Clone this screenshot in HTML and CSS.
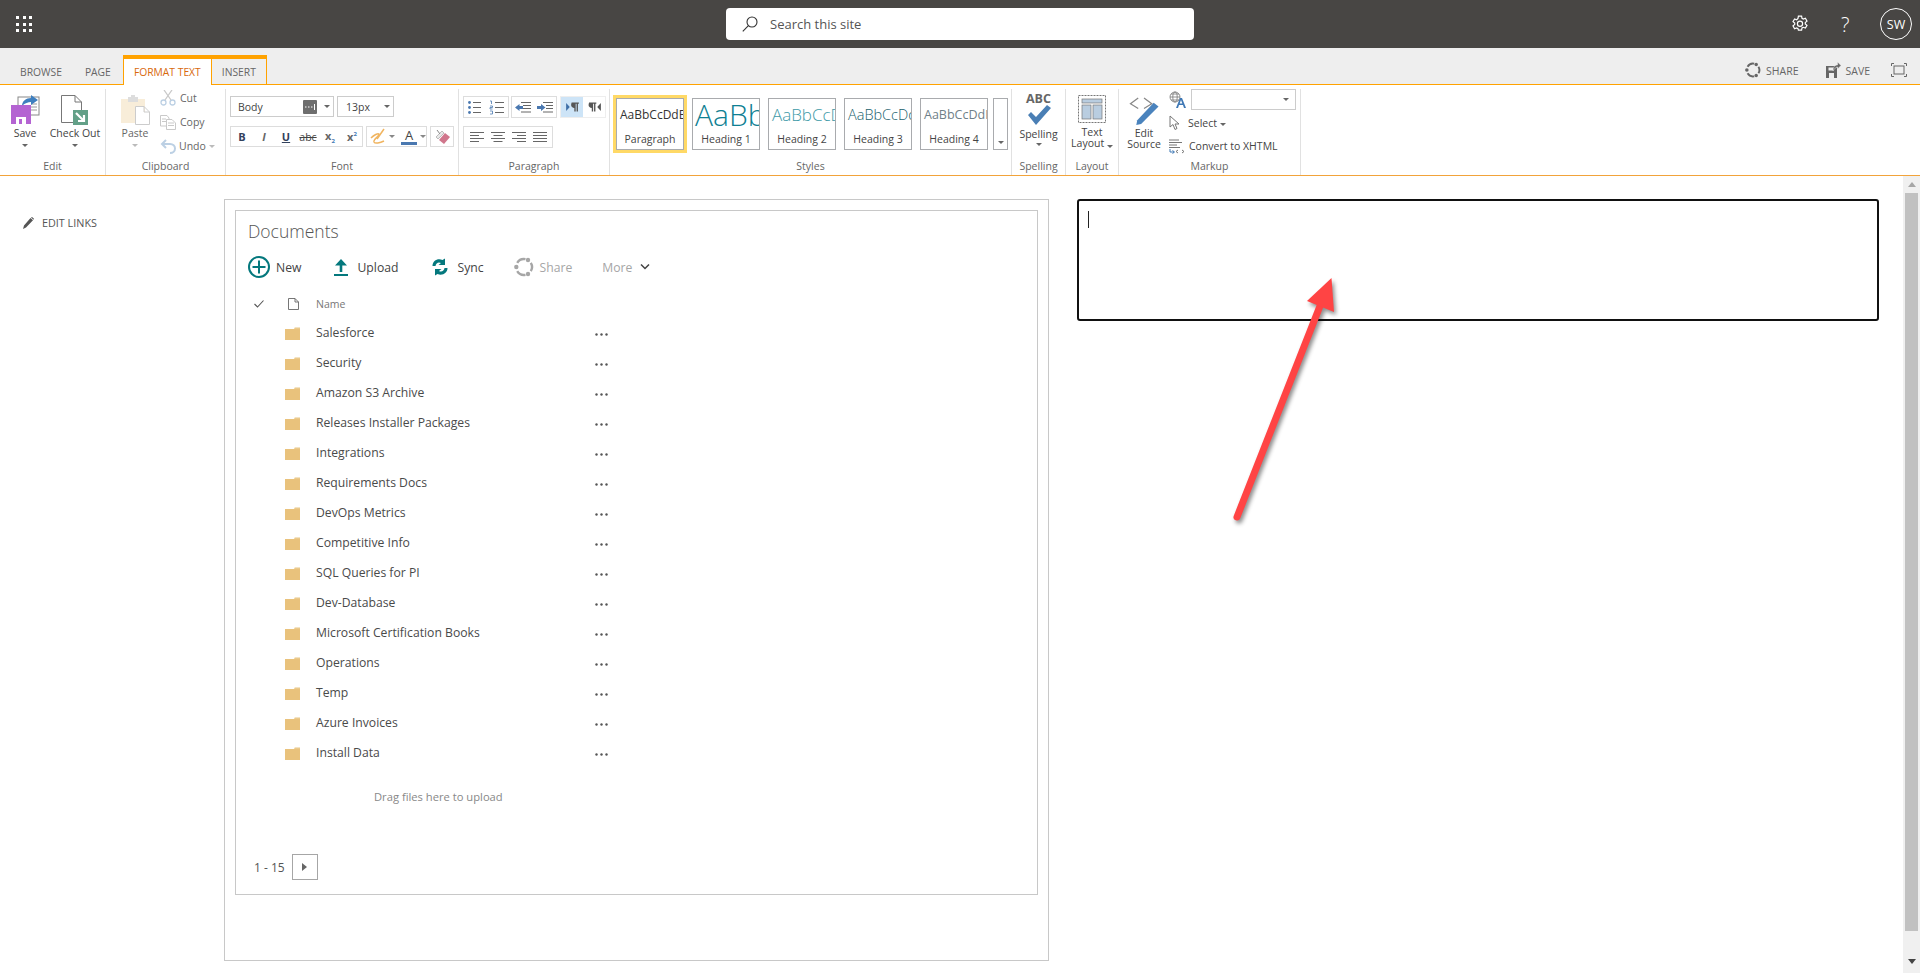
FILE: index.html
```html
<!DOCTYPE html>
<html lang="en">
<head>
    <meta charset="UTF-8">
    <title>Documents</title>
    <link rel="stylesheet" href="styles.css">
</head>
<body>

<svg class="defs" width="0" height="0">
    <symbol id="folder" viewBox="0 0 15 13">
        <path d="M9 1.2 L10 0 H15 V3 H9Z" fill="#f3e3c3"/>
        <path d="M0 2 H9 L10 1.2 H15 V13 H0Z" fill="#e9c27c"/>
    </symbol>
    <symbol id="dots" viewBox="0 0 13 3">
        <circle cx="1.5" cy="1.5" r="1.2" fill="#555"/>
        <circle cx="6.5" cy="1.5" r="1.2" fill="#555"/>
        <circle cx="11.5" cy="1.5" r="1.2" fill="#555"/>
    </symbol>
    <symbol id="circle-arrows" viewBox="0 0 20 20">
        <path d="M11.5 2.1 A8 8 0 0 0 3.2 5.8 M3.2 14.2 A8 8 0 0 0 11.5 17.9 M16.8 5.8 A8 8 0 0 1 16.8 14.2" fill="none" stroke="currentColor" stroke-width="2.4"/>
        <circle cx="14" cy="3" r="2.2" fill="currentColor"/>
        <circle cx="2.3" cy="10" r="2.2" fill="currentColor"/>
        <circle cx="14" cy="17" r="2.2" fill="currentColor"/>
    </symbol>
</svg>

<header class="topbar">
    <div class="waffle">
        <i></i><i></i><i></i><i></i><i></i><i></i><i></i><i></i><i></i>
    </div>
    <div class="search">
        <svg width="16" height="16" viewBox="0 0 16 16" fill="none" stroke="#333" stroke-width="1.1">
            <circle cx="10" cy="6" r="5"/>
            <path d="M6.4 9.6 L.8 15.4"/>
        </svg>
        <span>Search this site</span>
    </div>
    <div class="top-actions">
        <svg class="gear" width="18" height="18" viewBox="0 0 18 18" fill="none" stroke="#fff" stroke-width="1.2">
            <path d="M7.4 1.2h3.2l.4 2.2 1.3.7 2.1-.8 1.6 2.8-1.7 1.4v1.4l1.7 1.4-1.6 2.8-2.1-.8-1.3.7-.4 2.2H7.4L7 13.6l-1.3-.7-2.1.8L2 10.9l1.7-1.4V8.1L2 6.7l1.6-2.8 2.1.8L7 3.4z"/>
            <circle cx="9" cy="8.8" r="2.6"/>
        </svg>
        <span class="help">?</span>
        <span class="avatar">SW</span>
    </div>
</header>

<nav class="tabs">
    <span class="tab">BROWSE</span>
    <span class="tab tab-page">PAGE</span>
    <span class="tab tab-active">FORMAT TEXT</span>
    <span class="tab tab-insert">INSERT</span>
    <div class="tab-actions">
        <svg class="tab-icon" width="16" height="16"><use href="#circle-arrows"/></svg>
        <span class="tab-action">SHARE</span>
        <svg class="tab-icon save-icon" width="15" height="16" viewBox="0 0 15 16">
            <path d="M0 4 H9 L11 6 V16 H0Z" fill="#666"/>
            <rect x="3" y="11" width="5" height="5" fill="#eee"/>
            <rect x="2.5" y="5.5" width="5" height="3" fill="#eee"/>
            <path d="M7 9 C7 5 9 3 11.5 3 V0 L15 3.5 L11.5 7 V5 C10 5 8.5 6.5 7 9Z" fill="#666" stroke="#eee" stroke-width=".5"/>
        </svg>
        <span class="tab-action">SAVE</span>
        <svg class="focus" width="16" height="14" viewBox="0 0 16 14" fill="none" stroke="#666">
            <path d="M.5 3V.5H3 M13 .5h2.5V3 M15.5 11v2.5H13 M3 13.5H.5V11"/>
            <rect x="3" y="3" width="10" height="8"/>
        </svg>
    </div>
</nav>

<section class="ribbon">
    <div class="group group-edit">
        <div class="group-body">
            <div class="big-btn btn-save">
                <svg width="29" height="30" viewBox="0 0 29 30">
                    <rect x="7" y="2" width="21" height="18" fill="#fff" stroke="#888"/>
                    <path d="M20 9h6M20 12h6M20 15h6" stroke="#999"/>
                    <path d="M11 11 C11 6 15 3 20 3 V0 L27 5 L20 10 V7 C17 7 14 8 11 11Z" fill="#3f7fbf"/>
                    <path d="M0 10 H20 V29 H0Z" fill="#b463d2"/>
                    <rect x="5" y="22" width="10" height="7" fill="#fff"/>
                    <rect x="8" y="24" width="3" height="5" fill="#b463d2"/>
                </svg>
                <span>Save</span>
                <b class="caret"></b>
            </div>
            <div class="big-btn btn-checkout">
                <svg width="28" height="30" viewBox="0 0 28 30">
                    <path d="M.5.5 H14 L20.5 7 V27.5 H.5Z M14 .5 V7 H20.5" fill="#fff" stroke="#777"/>
                    <rect x="12" y="15" width="15" height="15" fill="#63a088"/>
                    <path d="M15 18 L23 26 M23 20 V26 H17" fill="none" stroke="#fff" stroke-width="2.2"/>
                </svg>
                <span>Check Out</span>
                <b class="caret"></b>
            </div>
        </div>
        <div class="group-label">Edit</div>
    </div>

    <div class="group group-clip">
        <div class="group-body">
            <div class="big-btn btn-paste dim">
                <svg width="29" height="30" viewBox="0 0 29 30">
                    <path d="M0 4 H24 V28 H0Z" fill="#f8edd9"/>
                    <rect x="7" y="2" width="10" height="5" fill="#ddd"/>
                    <rect x="10" y="0" width="4" height="3" fill="#ddd"/>
                    <path d="M14.5 11.5 H23 L28.5 17 V29.5 H14.5Z M23 11.5 V17 H28.5" fill="#fff" stroke="#ccc"/>
                </svg>
                <span>Paste</span>
                <b class="caret"></b>
            </div>
            <div class="small-col dim">
                <div class="small-btn">
                    <svg width="16" height="16" viewBox="0 0 16 16" fill="none" stroke="#bcd0e4" stroke-width="1.3">
                        <circle cx="3.5" cy="12.5" r="2.5"/>
                        <circle cx="12.5" cy="12.5" r="2.5"/>
                        <path d="M5 10 L12 0 M11 10 L4 0" stroke="#c9c9c9"/>
                    </svg>
                    <span>Cut</span>
                </div>
                <div class="small-btn">
                    <svg width="16" height="15" viewBox="0 0 16 15" fill="#fff" stroke="#c9c9c9">
                        <path d="M.5 .5H7L9 3V11H.5Z"/>
                        <path d="M6.5 4.5H12L15.5 8V14.5H6.5Z"/>
                        <path d="M8 8h6M8 10.5h6M2 4h4M2 6.5h4" fill="none"/>
                    </svg>
                    <span>Copy</span>
                </div>
                <div class="small-btn btn-undo">
                    <svg width="16" height="15" viewBox="0 0 16 15" fill="none" stroke="#bcd0e4" stroke-width="2">
                        <path d="M2 5H10 C13 5 15 7 15 9.5 C15 12 13 14 10 14"/>
                        <path d="M6 1 L2 5 L6 9"/>
                    </svg>
                    <span>Undo</span>
                    <b class="caret caret-small"></b>
                </div>
            </div>
        </div>
        <div class="group-label">Clipboard</div>
    </div>

    <div class="group group-font">
        <div class="group-body">
            <div class="font-rows">
                <div class="font-row">
                    <div class="select select-font">
                        <span>Body</span>
                        <svg width="14" height="14" viewBox="0 0 14 14">
                            <rect width="14" height="14" rx="1" fill="#6e6e6e"/>
                            <path d="M2 7h1.5M5 7h1.5M8 7h1.5M11.5 4v6" stroke="#fff"/>
                        </svg>
                        <b class="caret"></b>
                    </div>
                    <div class="select select-size">
                        <span>13px</span>
                        <b class="caret"></b>
                    </div>
                </div>
                <div class="font-row">
                    <div class="tool-box box-format">
                        <span class="fmt fmt-b">B</span>
                        <span class="fmt fmt-i">I</span>
                        <span class="fmt fmt-u">U</span>
                        <span class="fmt fmt-s">abc</span>
                        <span class="fmt fmt-x">x<sub>2</sub></span>
                        <span class="fmt fmt-x">x<sup>2</sup></span>
                    </div>
                    <div class="tool-box box-color">
                        <svg width="16" height="17" viewBox="0 0 16 17" fill="none" stroke="#f0b45f" stroke-width="1.5">
                            <path d="M1 10 C4 7 8 5 9 6 C10 8 3 11 4 14 C5 16 10 15 14 13"/>
                            <path d="M7 11 L14 1"/>
                        </svg>
                        <b class="caret caret-small"></b>
                        <span class="font-color">A</span>
                        <b class="caret caret-small"></b>
                    </div>
                    <div class="tool-box box-erase">
                        <svg width="15" height="15" viewBox="0 0 15 15">
                            <path d="M1 8 L7 2 L9 4 L3 10Z" fill="#e8e8e8" stroke="#999" stroke-width=".6"/>
                            <path d="M4 11 L10 4 L15 8 L9 15Z" fill="#d0768c"/>
                            <path d="M2 1 L5 5" stroke="#888"/>
                        </svg>
                    </div>
                </div>
            </div>
        </div>
        <div class="group-label">Font</div>
    </div>

    <div class="group group-para">
        <div class="group-body">
            <div class="para-row">
                <div class="tool-box para-lists">
                    <svg width="13" height="15" viewBox="0 0 13 15" stroke="#666">
                        <path d="M5 2.5h8M5 7.5h8M5 12.5h8"/>
                        <circle cx="1.5" cy="2.5" r="1.4" fill="#4a78b0" stroke="none"/>
                        <circle cx="1.5" cy="7.5" r="1.4" fill="#4a78b0" stroke="none"/>
                        <circle cx="1.5" cy="12.5" r="1.4" fill="#4a78b0" stroke="none"/>
                    </svg>
                    <svg width="15" height="15" viewBox="0 0 15 15" stroke="#666">
                        <path d="M6 2.5h9M6 7.5h9M6 12.5h9"/>
                        <path d="M1 1h1.5v3M1 6h2.5v1.5H1V9h2.5M1 11h2.5v3H1" fill="none" stroke="#4a78b0" stroke-width=".8"/>
                    </svg>
                </div>
                <div class="tool-box para-indent">
                    <svg width="16" height="11" viewBox="0 0 16 11" stroke="#666">
                        <path d="M6 .5h10M8 3.5h8M8 6.5h8M6 10h10"/>
                        <path d="M0 5.5 L4.5 2 V4 H8 V7 H4.5 V9Z" fill="#4a78b0" stroke="none"/>
                    </svg>
                    <svg width="16" height="11" viewBox="0 0 16 11" stroke="#666">
                        <path d="M6 .5h10M9 3.5h7M9 6.5h7M6 10h10"/>
                        <path d="M8.5 5.5 L4 2 V4 H0 V7 H4 V9Z" fill="#4a78b0" stroke="none"/>
                    </svg>
                </div>
                <div class="tool-box para-dir">
                    <span class="dir-btn dir-on">
                        <svg width="13" height="10" viewBox="0 0 14 11" fill="#555">
                            <path d="M0 1 L4 5.5 L0 10Z" fill="#3f6fa8"/>
                            <path d="M6 .5H14V2H13V10.5H11.5V2H10.5V10.5H9V6.5C7 6.5 5.5 5 5.5 3.5C5.5 2 6 1 6 .5Z"/>
                        </svg>
                    </span>
                    <span class="dir-btn">
                        <svg width="13" height="10" viewBox="0 0 14 11" fill="#555">
                            <path d="M14 1 L10 5.5 L14 10Z"/>
                            <path d="M1 .5H9V2H8V10.5H6.5V2H5.5V10.5H4V6.5C2 6.5 .5 5 .5 3.5C.5 2 1 1 1 .5Z"/>
                        </svg>
                    </span>
                </div>
            </div>
            <div class="tool-box para-align">
                <svg width="14" height="11" viewBox="0 0 14 11" stroke="#666"><path d="M0 .5h14M0 3.5h9M0 6.5h14M0 9.5h9"/></svg>
                <svg width="14" height="11" viewBox="0 0 14 11" stroke="#666"><path d="M0 .5h14M2.5 3.5h9M0 6.5h14M2.5 9.5h9"/></svg>
                <svg width="14" height="11" viewBox="0 0 14 11" stroke="#666"><path d="M0 .5h14M5 3.5h9M0 6.5h14M5 9.5h9"/></svg>
                <svg width="14" height="11" viewBox="0 0 14 11" stroke="#666"><path d="M0 .5h14M0 3.5h14M0 6.5h14M0 9.5h14"/></svg>
            </div>
        </div>
        <div class="group-label">Paragraph</div>
    </div>

    <div class="group group-styles">
        <div class="group-body">
            <div class="style-wrap">
                <div class="style-card">
                    <div class="style-sample sample-p">AaBbCcDdEe</div>
                    <div class="style-name">Paragraph</div>
                </div>
            </div>
            <div class="style-card">
                <div class="style-sample sample-h1">AaBb</div>
                <div class="style-name">Heading 1</div>
            </div>
            <div class="style-card">
                <div class="style-sample sample-h2">AaBbCcDd</div>
                <div class="style-name">Heading 2</div>
            </div>
            <div class="style-card">
                <div class="style-sample sample-h3">AaBbCcDdE</div>
                <div class="style-name">Heading 3</div>
            </div>
            <div class="style-card">
                <div class="style-sample sample-h4">AaBbCcDdEe</div>
                <div class="style-name">Heading 4</div>
            </div>
            <div class="style-more"><b class="caret"></b></div>
        </div>
        <div class="group-label">Styles</div>
    </div>

    <div class="group group-spell">
        <div class="group-body">
            <div class="big-btn btn-spell">
                <span class="abc">ABC</span>
                <svg width="24" height="20" viewBox="0 0 24 20">
                    <path d="M1 10 L4 7 L9 12 L20 0 L24 3 L9 20Z" fill="#4a7fb5"/>
                </svg>
                <span>Spelling</span>
                <b class="caret"></b>
            </div>
        </div>
        <div class="group-label">Spelling</div>
    </div>

    <div class="group group-layout">
        <div class="group-body">
            <div class="big-btn btn-layout">
                <svg width="28" height="28" viewBox="0 0 28 28" fill="none">
                    <rect x=".5" y=".5" width="27" height="27" stroke="#777" stroke-dasharray="2 1"/>
                    <rect x="4" y="4" width="20" height="4" fill="#b9cde0" stroke="#777" stroke-width=".7"/>
                    <rect x="4" y="10" width="9" height="14" fill="#b9cde0" stroke="#777" stroke-width=".7"/>
                    <rect x="15" y="10" width="9" height="14" fill="#b9cde0" stroke="#777" stroke-width=".7"/>
                </svg>
                <span>Text</span>
                <span>Layout <b class="caret caret-inline"></b></span>
            </div>
        </div>
        <div class="group-label">Layout</div>
    </div>

    <div class="group group-markup">
        <div class="group-body">
            <div class="big-btn btn-source">
                <svg width="31" height="30" viewBox="0 0 31 31">
                    <path d="M9 3 L1 9 L9 14 M15 3 L23 9 L15 14" fill="none" stroke="#888" stroke-width="1.3"/>
                    <path d="M8 26 L25 8 L30 12 L12 30 L7 31Z" fill="#4a83bd"/>
                </svg>
                <span>Edit</span>
                <span>Source</span>
            </div>
            <div class="small-col markup-col">
                <div class="small-btn markup-lang">
                    <svg width="17" height="17" viewBox="0 0 17 17">
                        <g fill="none" stroke="#777" stroke-width=".8">
                            <circle cx="6" cy="6" r="5"/>
                            <ellipse cx="6" cy="6" rx="2.2" ry="5"/>
                            <path d="M1 6h10M2 3h8M2 9h8"/>
                        </g>
                        <path d="M7 17 L11 7 H13 L17 17 H15 L14 14 H10 L9 17Z M10.7 12.5H13.3L12 9Z" fill="#3f78b5" fill-rule="evenodd"/>
                    </svg>
                    <div class="select select-lang"><b class="caret"></b></div>
                </div>
                <div class="small-btn">
                    <svg width="15" height="16" viewBox="0 0 15 16">
                        <path d="M1 1 V12 L4 9.5 L6 14.5 L8 13.5 L6 9 H10Z" fill="#fff" stroke="#777"/>
                    </svg>
                    <span>Select <b class="caret caret-inline"></b></span>
                </div>
                <div class="small-btn btn-convert">
                    <svg width="16" height="15" viewBox="0 0 16 15" fill="none">
                        <path d="M0 1h10M0 3.5h13M0 6h8M0 8.5h11" stroke="#777"/>
                        <path d="M1 10v3h4M3.5 11.5L5.5 13L3.5 14.5" stroke="#3f78b5"/>
                        <path d="M9 11l-2 1.5L9 14M13 11l2 1.5L13 14" stroke="#777"/>
                    </svg>
                    <span>Convert to XHTML</span>
                </div>
            </div>
        </div>
        <div class="group-label">Markup</div>
    </div>
</section>

<main class="page">
    <aside class="side-nav">
        <svg width="11" height="12" viewBox="0 0 11 12">
            <path d="M0 12 L1 8.5 L7.5 1 L10 3.2 L3 10.5Z M8 .5 L9 0 L11 1.8 L10.5 2.7Z" fill="#555"/>
        </svg>
        <span>EDIT LINKS</span>
    </aside>

    <section class="zone">
        <div class="webpart">
            <h2 class="wp-title">Documents</h2>

            <div class="commands">
                <div class="cmd cmd-new">
                    <svg width="22" height="22" viewBox="0 0 22 22" fill="none" stroke="#04787d" stroke-width="2">
                        <circle cx="11" cy="11" r="10"/>
                        <path d="M11 4.5v13M4.5 11h13"/>
                    </svg>
                    <span>New</span>
                </div>
                <div class="cmd cmd-upload">
                    <svg width="14" height="17" viewBox="0 0 14 17" fill="#04787d">
                        <path d="M7 0 L13 6.5 H8.3 V13 H5.7 V6.5 H1Z"/>
                        <rect x="0" y="15" width="14" height="2"/>
                    </svg>
                    <span>Upload</span>
                </div>
                <div class="cmd cmd-sync">
                    <svg width="18" height="18" viewBox="0 0 17 18" fill="#04787d">
                        <path d="M1 8 C1 3 6 0 11 2 L13.5 .5 V7 H7 L9.5 5 C7 3.5 4.5 5 4 8Z"/>
                        <path d="M16 10 C16 15 11 18 6 16 L3.5 17.5 V11 H10 L7.5 13 C10 14.5 12.5 13 13 10Z"/>
                    </svg>
                    <span>Sync</span>
                </div>
                <div class="cmd cmd-share off">
                    <svg width="20" height="20"><use href="#circle-arrows"/></svg>
                    <span>Share</span>
                </div>
                <div class="cmd cmd-more off">
                    <span>More</span>
                    <svg width="10" height="6" viewBox="0 0 10 6" fill="none" stroke="#444" stroke-width="1.5">
                        <path d="M1 .5 L5 4.5 L9 .5"/>
                    </svg>
                </div>
            </div>

            <div class="list-head">
                <svg class="head-check" width="10" height="8" viewBox="0 0 10 8" fill="none" stroke="#555" stroke-width="1.1">
                    <path d="M.5 4 L3.5 7 L9.5 .5"/>
                </svg>
                <svg class="head-doc" width="11" height="12" viewBox="0 0 11 12" fill="none" stroke="#666" stroke-width=".9">
                    <path d="M.5 .5H7L10.5 4V11.5H.5Z M7 .5V4H10.5"/>
                </svg>
                <span>Name</span>
            </div>

            <div class="rows">
                <div class="row"><svg class="fold"><use href="#folder"/></svg><span class="row-name">Salesforce</span><svg class="more"><use href="#dots"/></svg></div>
                <div class="row"><svg class="fold"><use href="#folder"/></svg><span class="row-name">Security</span><svg class="more"><use href="#dots"/></svg></div>
                <div class="row"><svg class="fold"><use href="#folder"/></svg><span class="row-name">Amazon S3 Archive</span><svg class="more"><use href="#dots"/></svg></div>
                <div class="row"><svg class="fold"><use href="#folder"/></svg><span class="row-name">Releases Installer Packages</span><svg class="more"><use href="#dots"/></svg></div>
                <div class="row"><svg class="fold"><use href="#folder"/></svg><span class="row-name">Integrations</span><svg class="more"><use href="#dots"/></svg></div>
                <div class="row"><svg class="fold"><use href="#folder"/></svg><span class="row-name">Requirements Docs</span><svg class="more"><use href="#dots"/></svg></div>
                <div class="row"><svg class="fold"><use href="#folder"/></svg><span class="row-name">DevOps Metrics</span><svg class="more"><use href="#dots"/></svg></div>
                <div class="row"><svg class="fold"><use href="#folder"/></svg><span class="row-name">Competitive Info</span><svg class="more"><use href="#dots"/></svg></div>
                <div class="row"><svg class="fold"><use href="#folder"/></svg><span class="row-name">SQL Queries for PI</span><svg class="more"><use href="#dots"/></svg></div>
                <div class="row"><svg class="fold"><use href="#folder"/></svg><span class="row-name">Dev-Database</span><svg class="more"><use href="#dots"/></svg></div>
                <div class="row"><svg class="fold"><use href="#folder"/></svg><span class="row-name">Microsoft Certification Books</span><svg class="more"><use href="#dots"/></svg></div>
                <div class="row"><svg class="fold"><use href="#folder"/></svg><span class="row-name">Operations</span><svg class="more"><use href="#dots"/></svg></div>
                <div class="row"><svg class="fold"><use href="#folder"/></svg><span class="row-name">Temp</span><svg class="more"><use href="#dots"/></svg></div>
                <div class="row"><svg class="fold"><use href="#folder"/></svg><span class="row-name">Azure Invoices</span><svg class="more"><use href="#dots"/></svg></div>
                <div class="row"><svg class="fold"><use href="#folder"/></svg><span class="row-name">Install Data</span><svg class="more"><use href="#dots"/></svg></div>
            </div>

            <div class="drag-hint">Drag files here to upload</div>

            <div class="pager">
                <span>1 - 15</span>
                <button class="pager-next"><i></i></button>
            </div>
        </div>
    </section>

    <section class="editor"><i class="text-caret"></i></section>

    <div class="scrollbar">
        <i class="scroll-up"></i>
        <div class="scroll-thumb"></div>
        <i class="scroll-down"></i>
    </div>
</main>

<!-- annotation drawn over the page -->
<svg class="annot" width="130" height="260" viewBox="0 0 130 260">
    <path d="M17 247 L100 36" stroke="#ff4444" stroke-width="7" stroke-linecap="round"/>
    <path d="M111.5 8 L87 31 L114 42Z" fill="#ff4444"/>
</svg>

</body>
</html>
```

FILE: styles.css
```css
* {
    box-sizing: border-box;
}

html,
body {
    margin: 0;
    height: 973px;
    overflow: hidden;
}

body {
    position: relative;
    font-family: "Open Sans", "Noto Sans", sans-serif;
    font-size: 10.5px;
    color: #444;
    background: #fff;
}

.defs {
    position: absolute;
}

/* top bar */
.topbar {
    height: 48px;
    background: #484644;
    display: flex;
    align-items: center;
    position: relative;
}

.waffle {
    width: 16px;
    margin-left: 16px;
    display: grid;
    grid-template-columns: repeat(3, 3px);
    gap: 3.5px;
}

.waffle i {
    width: 3px;
    height: 3px;
    background: #fff;
}

.search {
    position: absolute;
    left: 726px;
    top: 8px;
    width: 468px;
    height: 32px;
    background: #fff;
    border-radius: 4px;
    display: flex;
    align-items: center;
    padding-left: 16px;
    gap: 12px;
    font-size: 13px;
    color: #555;
}

.top-actions {
    margin-left: auto;
    display: flex;
    align-items: center;
    color: #fff;
}

.help {
    margin-left: 32px;
    font-size: 20px;
    font-weight: 300;
    width: 13px;
}

.avatar {
    margin-left: 26px;
    margin-right: 8px;
    width: 32px;
    height: 32px;
    border: 1px solid #fff;
    border-radius: 50%;
    display: flex;
    align-items: center;
    justify-content: center;
    font-size: 12.5px;
}

/* tabs */
.tabs {
    height: 37px;
    background: #eee;
    border-bottom: 1px solid #ffa200;
    display: flex;
    align-items: flex-end;
    padding-left: 20px;
    font-size: 10.3px;
    color: #666;
}

.tab {
    height: 29px;
    line-height: 29px;
    padding-top: 3px;
}

.tab-page {
    margin-left: 23px;
}

.tab-active {
    margin-left: 12px;
    width: 89px;
    text-align: center;
    background: #fff;
    color: #d8690c;
    border: 1px solid #ffa200;
    border-top-width: 4px;
    border-bottom: 0;
    height: 30px;
    margin-bottom: -1px;
    line-height: 26px;
    padding-top: 0;
}

.tab-insert {
    width: 55px;
    text-align: center;
    border: 1px solid #ffa200;
    border-top-width: 4px;
    border-left: 0;
    border-bottom: 0;
    line-height: 26px;
    padding-top: 0;
}

.tab-actions {
    margin-left: auto;
    margin-right: 13px;
    height: 29px;
    display: flex;
    align-items: center;
    color: #666;
    font-size: 10.5px;
}

.tab-action {
    margin-left: 5px;
    margin-top: 2px;
}

.save-icon {
    margin-left: 27px;
}

.focus {
    margin-left: 21px;
}

/* ribbon */
.ribbon {
    height: 91px;
    border-bottom: 1px solid #f2a33a;
    display: flex;
}

.group {
    flex: none;
    display: flex;
    flex-direction: column;
    margin-top: 4px;
    border-right: 1px solid #e1e1e1;
}

.group-body {
    flex: 1;
    display: flex;
    min-height: 0;
}

.group-label {
    height: 17px;
    line-height: 17px;
    text-align: center;
    color: #666;
}

.group-edit {
    width: 106px;
}

.group-clip {
    width: 120px;
}

.group-font {
    width: 233px;
}

.group-para {
    width: 151px;
}

.group-styles {
    width: 402px;
}

.group-spell {
    width: 54px;
}

.group-layout {
    width: 53px;
}

.group-markup {
    width: 182px;
}

.caret {
    display: block;
    width: 0;
    height: 0;
    border: 3.5px solid transparent;
    border-top: 3.5px solid #666;
    border-bottom: 0;
}

.caret-small {
    border-width: 3px;
    border-bottom: 0;
    border-top-color: #888;
}

.caret-inline {
    display: inline-block;
    vertical-align: middle;
    border-width: 3px;
    border-bottom: 0;
}

.big-btn {
    display: flex;
    flex-direction: column;
    align-items: center;
    padding-top: 6px;
    line-height: 11px;
    white-space: nowrap;
}

.big-btn svg {
    flex: none;
    margin-bottom: 3px;
}

.big-btn .caret {
    margin-top: 5px;
}

.dim {
    color: #666;
}

.dim .caret {
    border-top-color: #bbb;
}

.btn-save {
    width: 40px;
    margin-left: 5px;
}

.btn-checkout {
    width: 52px;
    margin-left: 4px;
}

.btn-paste {
    width: 36px;
    margin-left: 11px;
}

.small-col {
    display: flex;
    flex-direction: column;
    gap: 8px;
    margin-left: 7px;
    padding-top: 1px;
}

.small-btn {
    height: 16px;
    display: flex;
    align-items: center;
    gap: 4px;
    white-space: nowrap;
}

.btn-undo {
    gap: 3px;
}

.small-btn .caret-small {
    margin-left: 0;
    border-top-color: #bbb;
}

/* font group */
.font-rows {
    margin-left: 4px;
    padding-top: 7px;
    display: flex;
    flex-direction: column;
    gap: 9px;
}

.font-row {
    display: flex;
    gap: 3px;
}

.select {
    height: 21px;
    border: 1px solid #ccc;
    display: flex;
    align-items: center;
    padding-left: 7px;
}

.select-font {
    width: 104px;
}

.select-font svg {
    margin-left: auto;
    margin-right: 7px;
}

.select-font .caret {
    margin-right: 3px;
}

.select-size {
    width: 57px;
    padding-left: 8px;
}

.select-size .caret {
    margin-left: auto;
    margin-right: 3px;
}

.tool-box {
    height: 21px;
    border: 1px solid #ddd;
    display: flex;
    align-items: center;
}

.box-format {
    width: 133px;
}

.fmt {
    flex: none;
    width: 22px;
    text-align: center;
    font-size: 11px;
    color: #444;
}

.fmt-b {
    font-weight: 700;
    color: #33415c;
}

.fmt-i {
    font-style: italic;
    font-weight: 700;
    color: #666;
}

.fmt-u {
    text-decoration: underline;
    font-weight: 700;
    color: #33415c;
}

.fmt-s {
    text-decoration: line-through;
    font-size: 10.5px;
}

.fmt-x {
    font-weight: 700;
    color: #666;
}

.fmt-x sub,
.fmt-x sup {
    font-size: 6px;
    color: #3f78b5;
}

.box-color {
    width: 61px;
    padding-left: 3px;
    gap: 3px;
}

.font-color {
    width: 16px;
    margin-left: 3px;
    text-align: center;
    font-size: 13px;
    line-height: 13px;
    border-bottom: 3px solid #4a78b0;
}

.box-erase {
    width: 24px;
    justify-content: center;
}

/* paragraph group */
.group-para .group-body {
    flex-direction: column;
    padding: 7px 0 0 4px;
    gap: 8px;
}

.para-row {
    display: flex;
    gap: 2px;
}

.para-row .tool-box {
    height: 22px;
    justify-content: space-around;
}

.para-lists {
    width: 46px;
}

.para-indent {
    width: 46px;
}

.para-dir {
    width: 46px;
    margin-left: 1px;
    border: 1px solid #eee;
}

.dir-btn {
    flex: 1;
    height: 100%;
    display: flex;
    align-items: center;
    justify-content: center;
}

.dir-on {
    background: #cde4f7;
}

.para-align {
    width: 90px;
    height: 22px;
    justify-content: space-around;
    padding: 0 2px;
}

/* styles gallery */
.group-styles .group-body {
    padding: 9px 0 0 6px;
    gap: 8px;
}

.style-wrap {
    margin: -3px -3px 0;
    height: 58px;
    padding: 3px;
    background: #ffd966;
    flex: none;
}

.style-card {
    width: 68px;
    height: 52px;
    border: 1px solid #a9abae;
    background: #fff;
    flex: none;
    text-align: center;
    overflow: hidden;
}

.style-sample {
    height: 32px;
    line-height: 31px;
    white-space: nowrap;
    overflow: hidden;
    text-align: left;
    padding-left: 3px;
}

.sample-p {
    font-size: 12px;
    color: #333;
}

.sample-h1 {
    font-size: 30px;
    font-weight: 300;
    color: #0f7f93;
    padding-left: 2px;
}

.sample-h2 {
    font-size: 17px;
    font-weight: 300;
    color: #3d9aa8;
}

.sample-h3 {
    font-size: 14.5px;
    font-weight: 300;
    color: #225f6e;
}

.sample-h4 {
    font-size: 12.5px;
    color: #6f7f88;
}

.style-name {
    line-height: 14px;
    margin-top: 1px;
}

.style-more {
    width: 15px;
    height: 52px;
    border: 1px solid #a9abae;
    margin-left: -3px;
    display: flex;
    align-items: flex-end;
    justify-content: center;
    padding-bottom: 5px;
}

/* spelling, layout, markup */
.btn-spell {
    width: 100%;
    padding-top: 4px;
}

.abc {
    font-size: 12.5px;
    font-weight: 700;
    line-height: 12px;
    color: #666;
}

.btn-spell svg {
    margin-top: 0;
    margin-bottom: 4px;
}

.btn-spell .caret {
    margin-top: 3px;
}

.btn-layout {
    width: 100%;
}

.btn-layout svg {
    margin-bottom: 4px;
}

.btn-source {
    width: 44px;
    margin-left: 3px;
}

.markup-col {
    margin-left: 3px;
    padding-top: 0;
    gap: 5px;
}

.markup-lang {
    height: 21px;
    gap: 5px;
}

.select-lang {
    width: 105px;
    justify-content: flex-end;
    padding-right: 6px;
}

.btn-convert {
    margin-top: 2px;
}

/* page */
.page {
    height: 797px;
    display: flex;
    align-items: flex-start;
}

.side-nav {
    width: 224px;
    flex: none;
    padding: 39px 0 0 23px;
    display: flex;
    align-items: center;
    gap: 8px;
    font-size: 10.8px;
    color: #555;
}

.zone {
    flex: none;
    width: 825px;
    height: 762px;
    margin-top: 23px;
    padding: 10px;
    border: 1px solid #c8c8c8;
}

.webpart {
    width: 803px;
    height: 685px;
    border: 1px solid #c8c8c8;
    padding: 0 12px;
}

.wp-title {
    margin: 0;
    padding-top: 7px;
    height: 36px;
    font-size: 17.5px;
    line-height: 26px;
    font-weight: 300;
    color: #555;
}

.commands {
    height: 36px;
    display: flex;
    align-items: center;
    font-size: 12.2px;
    color: #444;
    margin-top: 2px;
}

.cmd {
    display: flex;
    align-items: center;
    white-space: nowrap;
}

.cmd-new {
    gap: 6px;
}

.cmd-upload {
    gap: 9px;
    margin-left: 33px;
}

.cmd-sync {
    gap: 8px;
    margin-left: 33px;
}

.cmd-share {
    gap: 6px;
    margin-left: 30px;
}

.cmd-more {
    gap: 8px;
    margin-left: 30px;
}

.off {
    color: #a6a6a6;
}

.list-head {
    height: 30px;
    margin-top: 4px;
    display: flex;
    align-items: center;
    color: #777;
}

.head-check {
    margin-left: 6px;
}

.head-doc {
    margin-left: 24px;
}

.list-head span {
    margin-left: 17px;
}

.row {
    height: 30px;
    display: flex;
    align-items: center;
}

.fold {
    width: 15px;
    height: 13px;
    margin: 0 0 1px 37px;
    flex: none;
}

.row-name {
    width: 279px;
    margin-left: 16px;
    flex: none;
    font-size: 12.2px;
    color: #4a4a4a;
    position: relative;
    top: -2px;
}

.more {
    width: 13px;
    height: 3px;
    flex: none;
}

.drag-hint {
    margin-top: 19px;
    margin-left: 126px;
    font-size: 11.2px;
    line-height: 18px;
    color: #888;
}

.pager {
    margin-top: 48px;
    margin-left: 6px;
    display: flex;
    align-items: center;
    gap: 7px;
    font-size: 12px;
    color: #555;
}

.pager-next {
    width: 26px;
    height: 26px;
    padding: 0;
    border: 1px solid #a6a6a6;
    background: #fff;
    display: flex;
    align-items: center;
    justify-content: center;
}

.pager-next i {
    border: 4px solid transparent;
    border-left: 5px solid #666;
    border-right: 0;
}

.editor {
    flex: none;
    width: 802px;
    height: 122px;
    margin: 23px 0 0 28px;
    border: 2px solid #111;
    border-radius: 3px;
    padding: 10px 9px;
}

.text-caret {
    display: block;
    width: 1px;
    height: 17px;
    background: #222;
}

.scrollbar {
    width: 17px;
    height: 797px;
    margin-left: auto;
    background: #f0f0f0;
    padding: 0 2px;
    display: flex;
    flex-direction: column;
}

.scroll-up {
    display: block;
    margin: 6px auto 6px;
    width: 0;
    height: 0;
    border: 4px solid transparent;
    border-top: 0;
    border-bottom: 5px solid #a6a6a6;
}

.scroll-thumb {
    height: 738px;
    background: #c1c1c1;
}

.scroll-down {
    display: block;
    margin: 28px auto 0;
    width: 0;
    height: 0;
    border: 4px solid transparent;
    border-bottom: 0;
    border-top: 5px solid #444;
}

/* red annotation arrow */
.annot {
    position: absolute;
    left: 1220px;
    top: 270px;
    filter: drop-shadow(2px 3px 2px rgba(0, 0, 0, 0.45));
}
```
